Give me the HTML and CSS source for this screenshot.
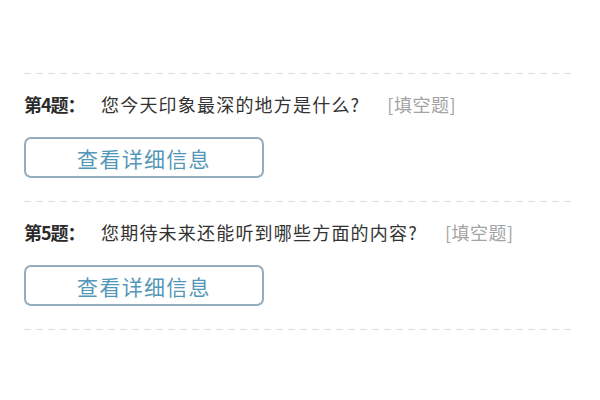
FILE: index.html
```html
<!DOCTYPE html>
<html lang="zh-CN">
<head>
<meta charset="utf-8">
<link rel="stylesheet" href="styles.css">
</head>
<body>
<div class="page">
  <div class="divider"></div>
  <section class="question">
    <div class="q-row">
      <span class="q-label">第4题：</span>
      <span class="q-text">您今天印象最深的地方是什么?</span>
      <span class="q-type">[填空题]</span>
    </div>
    <button class="detail-btn">查看详细信息</button>
  </section>
  <div class="divider"></div>
  <section class="question">
    <div class="q-row">
      <span class="q-label">第5题：</span>
      <span class="q-text">您期待未来还能听到哪些方面的内容?</span>
      <span class="q-type">[填空题]</span>
    </div>
    <button class="detail-btn">查看详细信息</button>
  </section>
  <div class="divider"></div>
</div>
</body>
</html>
```
FILE: styles.css
```css
html, body {
  margin: 0;
  padding: 0;
  background: #ffffff;
}
body {
  font-family: "Noto Sans CJK SC", "Noto Sans", sans-serif;
  width: 600px;
  height: 400px;
  overflow: hidden;
}
.page {
  padding: 73px 24px 0 24px;
}
.divider {
  height: 1px;
  background: repeating-linear-gradient(to right, #dcdcdc 0 7px, transparent 7px 12px);
}
.question {
  padding: 20px 0 23px 0;
}
.q-row {
  display: flex;
  align-items: center;
  height: 20px;
  white-space: nowrap;
}
.q-label {
  width: 77px;
  font-size: 18px;
  font-weight: bold;
  color: #2a2a2a;
  letter-spacing: -1px;
}
.q-text {
  font-size: 18px;
  color: #333333;
  letter-spacing: 1.2px;
}
.q-type {
  margin-left: 27px;
  font-size: 18px;
  color: #a3a3a3;
  letter-spacing: 0.5px;
}
.detail-btn {
  display: block;
  margin-top: 23px;
  width: 240px;
  height: 41px;
  box-sizing: border-box;
  border: 2px solid #92adbe;
  border-radius: 7px;
  background: #ffffff;
  color: #5597b6;
  font-family: "Noto Sans CJK SC", "Noto Sans", sans-serif;
  font-size: 21px;
  letter-spacing: 1.3px;
  padding: 0;
  text-align: center;
}
```
